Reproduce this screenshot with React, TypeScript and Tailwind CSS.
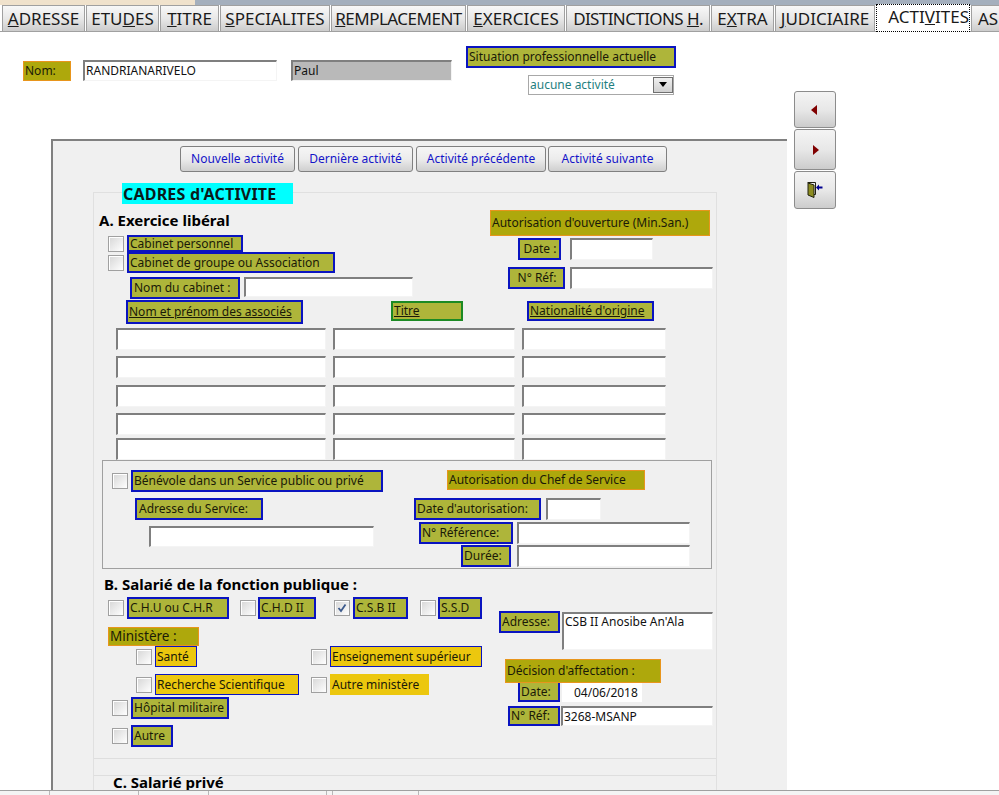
import type { ReactNode } from 'react';
import clsx from 'clsx';

const tabs: { before: string; key: string; after: string; width: string }[] = [
  { before: '', key: 'A', after: 'DRESSE', width: 'w-[83px]' },
  { before: 'ETU', key: 'D', after: 'ES', width: 'w-[73px]' },
  { before: '', key: 'T', after: 'ITRE', width: 'w-[59px]' },
  { before: '', key: 'S', after: 'PECIALITES', width: 'w-[110px]' },
  { before: '', key: 'R', after: 'EMPLACEMENT', width: 'w-[135px] tracking-[-0.5px]' },
  { before: '', key: 'E', after: 'XERCICES', width: 'w-[98px]' },
  { before: 'DISTINCTIONS ', key: 'H', after: '.', width: 'w-[144px] tracking-[-0.6px]' },
  { before: 'E', key: 'X', after: 'TRA', width: 'w-[63px]' },
  { before: '', key: 'J', after: 'UDICIAIRE', width: 'w-[100px]' },
];

const footerCells = ['w-[50px]', 'w-[89px]', 'w-[70px]', 'w-[118px]', 'w-[6px]', 'w-[86px]'];

const Label = ({ children, className, tone = 'blue' }: { children: ReactNode; className?: string; tone?: 'blue' | 'green' | 'orange' | 'yellow' | 'plain' }) => (
  <div
    className={clsx(
      'flex shrink-0 items-center overflow-hidden whitespace-nowrap text-[12px] leading-none text-[#1a1a08]',
      {
        'border-2 border-[#0a14c0] bg-[#aeb53a] pl-[1px]': tone === 'blue',
        'border-2 border-[#1c8a24] bg-[#aeb53a] pl-[1px]': tone === 'green',
        'border border-[#e8951c] bg-[#aea80c] pl-[1px]': tone === 'orange',
        'border border-[#0a14c0] bg-[#ecc70e] pl-[1px]': tone === 'yellow',
        'bg-[#ecc70e] pl-[2px]': tone === 'plain',
      },
      className,
    )}
  >
    {children}
  </div>
);

const Field = ({ className, value }: { className?: string; value?: string }) => (
  <div
    className={clsx(
      'flex shrink-0 items-center overflow-hidden whitespace-nowrap border-t-2 border-l-2 border-r border-b border-t-[#7f7f7f] border-l-[#7f7f7f] border-r-[#f4f4f4] border-b-[#f4f4f4] bg-white pl-[1px] text-[12px] leading-none text-[#111]',
      className,
    )}
  >
    {value}
  </div>
);

const Check = ({ className, checked }: { className?: string; checked?: boolean }) => (
  <div className={clsx('flex h-4 w-4 shrink-0 items-center justify-center border border-[#a0a0a0] bg-gradient-to-br from-[#d6d6d6] to-white shadow-[inset_1px_1px_0_#ffffff]', className)}>
    {checked && (
      <svg width="10" height="10" viewBox="0 0 10 10">
        <path d="M1.5 5 L4 8 L8.5 1.5" fill="none" stroke="#3c5a8c" strokeWidth="1.8" />
      </svg>
    )}
  </div>
);

const ActionButton = ({ children, className }: { children: ReactNode; className?: string }) => (
  <div className={clsx('flex h-[26px] shrink-0 items-center justify-center rounded-[3px] border border-[#808080] bg-gradient-to-b from-[#f6f6f6] via-[#ececec] to-[#cfcfcf] text-[12px] text-[#1414c8]', className)}>
    {children}
  </div>
);

const NavButton = ({ children, className }: { children: ReactNode; className?: string }) => (
  <div className={clsx('flex w-[42px] items-center justify-center rounded-[3px] border border-[#8c8c8c] bg-gradient-to-b from-[#f4f4f4] via-[#e8e8e8] to-[#cccccc]', className)}>
    {children}
  </div>
);

const Heading = ({ children, className }: { children: ReactNode; className?: string }) => (
  <div className={clsx('flex items-center whitespace-nowrap font-bold text-[15px] leading-none text-black', className)}>{children}</div>
);

const associateRows = ['mt-[4px]', 'mt-[6px]', 'mt-[7px]', 'mt-[6px]', 'mt-[3px]'];

const App = () => {
  return (
    <div className="flex h-[795px] w-[999px] flex-col overflow-hidden bg-white font-['Noto_Sans',sans-serif]">
      {/* title strip + tab strip */}
      <div className="flex h-[5px] shrink-0">
        <div className="w-[195px] bg-[#f0e2cc]" />
        <div className="flex-1 bg-[#a4afbd]" />
      </div>
      <div className="flex h-[27px] shrink-0 items-stretch gap-[1px] border-b border-[#a0a0a0] pl-[2px] text-[17px] leading-none text-[#1a1a1a]">
        {tabs.map((tab) => (
          <div key={tab.key} className={clsx('flex shrink-0 items-center justify-center whitespace-pre border-x border-t border-[#a0a0a0] bg-gradient-to-b from-[#f8f8f8] via-[#e8e8e8] to-[#cccccc]', tab.width)}>
            {tab.before}<u>{tab.key}</u>{tab.after}
          </div>
        ))}
        <div className="-mt-[1px] -mb-[1px] flex w-[94px] shrink-0 items-center justify-end whitespace-pre border border-dotted border-black bg-white pb-[3px]">
          ACTI<u>V</u>ITES
        </div>
        <div className="flex w-[40px] shrink-0 items-center whitespace-pre border-x border-t border-[#a0a0a0] bg-gradient-to-b from-[#f8f8f8] via-[#e8e8e8] to-[#cccccc] pl-[6px]">
          AS
        </div>
      </div>

      <div className="flex flex-1">
        <div className="flex w-[787px] shrink-0 flex-col">
          {/* identity header */}
          <div className="flex h-[107px] shrink-0 items-start">
            <Label tone="orange" className="ml-[23px] mt-[29px] h-[20px] w-[48px]">Nom:</Label>
            <Field className="ml-[12px] mt-[28px] h-[21px] w-[194px]" value="RANDRIANARIVELO" />
            <Field className="ml-[14px] mt-[28px] h-[21px] w-[161px] !bg-[#b9b9b9]" value="Paul" />
            <div className="ml-[14px] mt-[14px] flex flex-col">
              <Label className="h-[22px] w-[210px]">Situation professionnelle actuelle</Label>
              <div className="ml-[62px] mt-[7px] flex h-[20px] w-[146px] items-center border border-[#a8a8a8] bg-white pl-[1px] text-[12px] text-[#1f7f7f]">
                aucune activité
                <div className="ml-auto flex h-[16px] w-[20px] items-center justify-center border border-[#707070] bg-gradient-to-b from-[#f0f0f0] to-[#d0d0d0]">
                  <svg width="10" height="6" viewBox="0 0 10 6"><path d="M1 0 H9 L5 5 Z" fill="#000" /></svg>
                </div>
              </div>
            </div>
          </div>

          {/* main panel */}
          <div className="ml-[51px] flex h-[651px] shrink-0 flex-col border-l-2 border-t-2 border-[#808080] bg-[#f0f0f0]">
            <div className="ml-[127px] mt-[5px] flex">
              <ActionButton className="w-[115px]">Nouvelle activité</ActionButton>
              <ActionButton className="ml-[3px] w-[115px]">Dernière activité</ActionButton>
              <ActionButton className="ml-[3px] w-[130px]">Activité précédente</ActionButton>
              <ActionButton className="ml-[2px] w-[119px]">Activité suivante</ActionButton>
            </div>

            <div className="ml-[40px] mt-[20px] flex w-[624px] flex-1 flex-col border-l border-t border-r border-[#e0e0e0]">
              <div className="-mt-[10px] ml-[28px] flex h-[21px] w-[171px] items-center bg-[#00ffff] pl-[1px] text-[16px] font-bold leading-none tracking-[0.2px] text-[#0a1a1a]">CADRES d'ACTIVITE</div>

              {/* A. */}
              <div className="flex">
                <div className="w-[396px] shrink-0">
                  <Heading className="ml-[5px] mt-[7px] h-[18px]">A. Exercice libéral</Heading>
                  <div className="ml-[14px] mt-[6px] flex items-center">
                    <Check />
                    <Label className="ml-[3px] h-[17px] w-[116px]">Cabinet personnel</Label>
                  </div>
                  <div className="ml-[14px] flex items-center">
                    <Check />
                    <Label className="ml-[3px] h-[21px] w-[208px]">Cabinet de groupe ou Association</Label>
                  </div>
                  <div className="ml-[36px] mt-[4px] flex items-start">
                    <Label className="h-[22px] w-[110px] pl-[2px]">Nom du cabinet :</Label>
                    <Field className="ml-[4px] h-[20px] w-[169px]" />
                  </div>
                </div>
                <div>
                  <Label tone="orange" className="mt-[6px] h-[26px] w-[220px]">Autorisation d'ouverture (Min.San.)</Label>
                  <div className="mt-[2px] flex">
                    <Label className="ml-[28px] h-[22px] w-[43px] justify-center">Date :</Label>
                    <Field className="ml-[9px] h-[22px] w-[83px]" />
                  </div>
                  <div className="mt-[7px] flex">
                    <Label className="ml-[18px] h-[22px] w-[57px] justify-center">N° Réf:</Label>
                    <Field className="ml-[5px] h-[22px] w-[143px]" />
                  </div>
                </div>
              </div>

              <div className="mt-[1px] flex items-start">
                <Label className="ml-[32px] h-[24px] w-[177px]"><u>Nom et prénom des associés</u></Label>
                <Label tone="green" className="ml-[88px] mt-[1px] h-[20px] w-[72px]"><u>Titre</u></Label>
                <Label className="ml-[64px] mt-[1px] h-[20px] w-[127px]"><u>Nationalité d'origine</u></Label>
              </div>

              {associateRows.map((top) => (
                <div key={top + associateRows.indexOf(top)} className={clsx('ml-[22px] flex gap-[7px]', top)}>
                  <Field className="h-[22px] w-[210px]" />
                  <Field className="h-[22px] w-[182px]" />
                  <Field className="h-[22px] w-[144px]" />
                </div>
              ))}

              {/* volunteer */}
              <div className="ml-[8px] flex h-[109px] w-[610px] shrink-0 border border-[#a0a0a0]">
                <div className="w-[311px] shrink-0">
                  <div className="ml-[9px] mt-[9px] flex items-center">
                    <Check />
                    <Label className="ml-[3px] h-[22px] w-[252px]">Bénévole dans un Service public ou privé</Label>
                  </div>
                  <Label className="ml-[32px] mt-[6px] h-[22px] w-[128px] pl-[2px]">Adresse du Service:</Label>
                  <Field className="ml-[46px] mt-[6px] h-[21px] w-[225px]" />
                </div>
                <div>
                  <Label tone="orange" className="ml-[33px] mt-[9px] h-[20px] w-[198px]">Autorisation du Chef de Service</Label>
                  <div className="mt-[8px] flex">
                    <Label className="h-[22px] w-[127px]">Date d'autorisation:</Label>
                    <Field className="ml-[5px] h-[22px] w-[55px]" />
                  </div>
                  <div className="mt-[2px] flex">
                    <Label className="ml-[5px] h-[22px] w-[94px]">N° Référence:</Label>
                    <Field className="ml-[4px] h-[22px] w-[173px]" />
                  </div>
                  <div className="mt-[1px] flex">
                    <Label className="ml-[47px] h-[22px] w-[50px]">Durée:</Label>
                    <Field className="ml-[6px] h-[22px] w-[173px]" />
                  </div>
                </div>
              </div>

              {/* B. */}
              <Heading className="ml-[10px] mt-[7px] h-[17px]">B. Salarié de la fonction publique :</Heading>
              <div className="flex">
                <div className="w-[405px] shrink-0">
                  <div className="ml-[14px] mt-[4px] flex items-center">
                    <Check />
                    <Label className="ml-[3px] h-[22px] w-[102px]">C.H.U ou C.H.R</Label>
                    <Check className="ml-[11px]" />
                    <Label className="ml-[2px] h-[22px] w-[58px]">C.H.D II</Label>
                    <Check className="ml-[18px]" checked />
                    <Label className="ml-[3px] h-[22px] w-[55px]">C.S.B II</Label>
                    <Check className="ml-[12px]" />
                    <Label className="ml-[2px] h-[22px] w-[44px]">S.S.D</Label>
                  </div>
                  <Label tone="orange" className="ml-[14px] mt-[8px] h-[19px] w-[91px] text-[13.5px]">Ministère :</Label>
                  <div className="ml-[42px] flex items-center">
                    <Check />
                    <Label tone="yellow" className="ml-[3px] h-[21px] w-[42px]">Santé</Label>
                    <Check className="ml-[114px]" />
                    <Label tone="yellow" className="ml-[3px] h-[21px] w-[152px]">Enseignement supérieur</Label>
                  </div>
                  <div className="ml-[42px] mt-[7px] flex items-center">
                    <Check />
                    <Label tone="yellow" className="ml-[3px] h-[21px] w-[144px]">Recherche Scientifique</Label>
                    <Check className="ml-[12px]" />
                    <Label tone="plain" className="ml-[3px] h-[21px] w-[99px]">Autre ministère</Label>
                  </div>
                  <div className="ml-[18px] mt-[2px] flex items-center">
                    <Check />
                    <Label className="ml-[3px] h-[22px] w-[98px]">Hôpital militaire</Label>
                  </div>
                  <div className="ml-[18px] mt-[6px] flex items-center">
                    <Check />
                    <Label className="ml-[3px] h-[22px] w-[42px]">Autre</Label>
                  </div>
                </div>
                <div>
                  <div className="mt-[18px] flex items-start">
                    <Label className="h-[22px] w-[61px]">Adresse:</Label>
                    <Field className="ml-[2px] mt-[1px] h-[38px] w-[151px] !items-start pt-[2px]" value="CSB II Anosibe An'Ala" />
                  </div>
                  <Label tone="orange" className="relative ml-[6px] mt-[9px] h-[24px] w-[156px]">Décision d'affectation :</Label>
                  <div className="flex">
                    <Label className="ml-[19px] h-[19px] w-[42px] border-t-0">Date:</Label>
                    <Field className="ml-[2px] h-[19px] w-[80px] !border-0 !pl-[12px]" value="04/06/2018" />
                  </div>
                  <div className="mt-[4px] flex">
                    <Label className="ml-[9px] h-[20px] w-[52px]">N° Réf:</Label>
                    <Field className="ml-[1px] h-[20px] w-[152px]" value="3268-MSANP" />
                  </div>
                </div>
              </div>

              {/* C. */}
              <div className="mt-[11px] h-[18px] shrink-0 border-y border-[#dedede]" />
              <Heading className="-mt-[1px] ml-[19px] h-[15px]">C. Salarié privé</Heading>
            </div>
          </div>
        </div>

        {/* record navigation */}
        <div className="ml-[7px] mt-[59px] flex flex-col gap-[1px]">
          <NavButton className="h-[37px]">
            <svg width="8" height="10" viewBox="0 0 8 10"><path d="M6 0 V10 L0 5 Z" fill="#800000" /></svg>
          </NavButton>
          <NavButton className="h-[41px]">
            <svg width="8" height="10" viewBox="0 0 8 10"><path d="M2 0 V10 L8 5 Z" fill="#800000" /></svg>
          </NavButton>
          <NavButton className="h-[38px]">
            <svg width="16" height="16" viewBox="0 0 16 16">
              <path d="M0.5 0.5 H8.5 V12.5 H7" fill="none" stroke="#202010" strokeWidth="1" />
              <path d="M1 1 L7 3 V15.5 L1 13 Z" fill="#8c8c20" stroke="#202010" strokeWidth="1" />
              <path d="M9 5.5 L12 2.5 V4.5 H15.5 V6.5 H12 V8.5 Z" fill="#000090" />
            </svg>
          </NavButton>
        </div>
      </div>

      {/* status strip */}
      <div className="flex h-[5px] shrink-0 border-t border-[#a0a0a0] bg-[#f4f4f4]">
        {footerCells.map((w) => (
          <div key={w} className={clsx('border-r border-[#b8b8b8]', w)} />
        ))}
      </div>
    </div>
  );
};

export default App;
